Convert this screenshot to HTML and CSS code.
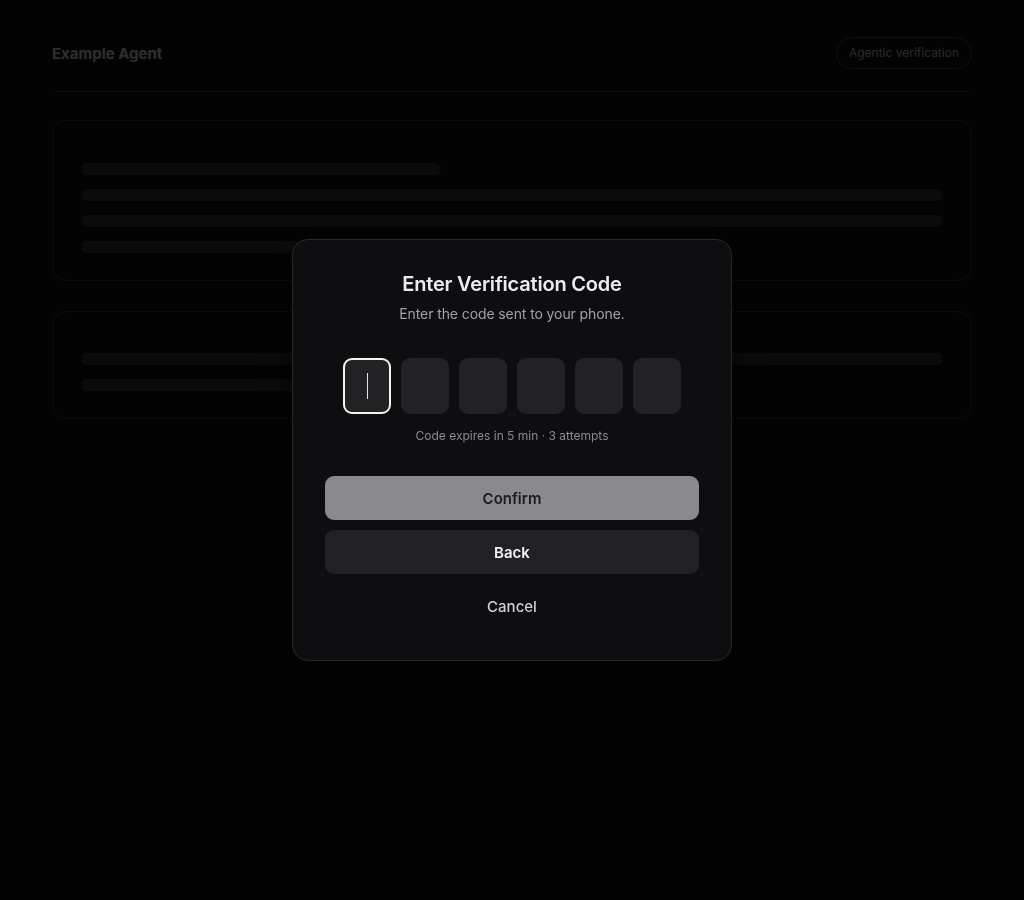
FILE: index.html
```html
<!DOCTYPE html>
<html lang="en">
  <head>
    <meta charset="UTF-8" />
    <meta name="viewport" content="width=device-width, initial-scale=1.0" />
    <title>Example Agent</title>
    <link rel="stylesheet" href="styles.css">
  </head>
  <body>
    <div class="page">
      <header class="topbar">
        <span class="brand">Example Agent</span>
        <span class="badge">Agentic verification</span>
      </header>

      <section class="card">
        <div class="bar bar-title"></div>
        <div class="bar"></div>
        <div class="bar"></div>
        <div class="bar bar-short"></div>
      </section>

      <section class="card card-small">
        <div class="bar"></div>
        <div class="bar bar-half"></div>
      </section>
    </div>

    <div class="overlay">
      <div class="modal">
        <h2 class="modal-title">Enter Verification Code</h2>
        <p class="modal-sub">Enter the code sent to your phone.</p>

        <div class="otp">
          <span class="otp-box active"><i class="caret"></i></span>
          <span class="otp-box"></span>
          <span class="otp-box"></span>
          <span class="otp-box"></span>
          <span class="otp-box"></span>
          <span class="otp-box"></span>
        </div>

        <p class="hint">Code expires in 5 min · 3 attempts</p>

        <div class="actions">
          <button class="btn btn-confirm">Confirm</button>
          <button class="btn btn-back">Back</button>
          <button class="btn btn-cancel">Cancel</button>
        </div>
      </div>
    </div>
  </body>
</html>
```

FILE: styles.css
```css
* {
  margin: 0;
  box-sizing: border-box;
}
body {
  margin: 0;
  background: #111113;
  font-family: Inter, "Noto Sans", "Liberation Sans", sans-serif;
  color: #e8e8e8;
  min-height: 900px;
}

/* page behind the dialog */
.page {
  padding: 37px 52px;
}
.topbar {
  display: flex;
  align-items: center;
  justify-content: space-between;
  padding-bottom: 22px;
  border-bottom: 1px solid #3c3c3e;
  margin-bottom: 28px;
}
.brand {
  font-size: 15px;
  font-weight: 700;
  color: #e2e2e2;
}
.badge {
  height: 32px;
  line-height: 30px;
  padding: 0 12px;
  border: 1px solid #545458;
  border-radius: 16px;
  font-size: 12px;
  color: #cfcfcf;
}
.card {
  border: 1px solid #444448;
  border-radius: 14px;
  padding: 42px 28px 27px;
  margin-bottom: 30px;
  display: flex;
  flex-direction: column;
  gap: 14px;
}
.card-small {
  padding-top: 41px;
}
.bar {
  height: 12px;
  border-radius: 6px;
  background: #38383c;
}
.bar-title {
  width: 360px;
}
.bar-short {
  width: 72%;
}
.bar-half {
  width: 60%;
}

/* dialog */
.overlay {
  position: fixed;
  inset: 0;
  background: rgba(0, 0, 0, 0.8);
  display: flex;
  align-items: center;
  justify-content: center;
}
.modal {
  width: 440px;
  background: #0e0e10;
  border: 1px solid #27272a;
  border-radius: 16px;
  padding: 32px;
  text-align: center;
  box-shadow: 0 20px 50px rgba(0, 0, 0, 0.5);
}
.modal-title {
  font-size: 20px;
  line-height: 24px;
  font-weight: 600;
  letter-spacing: -0.2px;
  color: #ececee;
}
.modal-sub {
  margin-top: 8px;
  font-size: 14px;
  line-height: 20px;
  letter-spacing: -0.1px;
  color: #a1a1a6;
}
.otp {
  margin-top: 34px;
  display: flex;
  justify-content: center;
  gap: 10px;
}
.otp-box {
  width: 48px;
  height: 56px;
  border-radius: 9px;
  background: #222224;
  display: flex;
  align-items: center;
  justify-content: center;
}
.otp-box.active {
  border: 2px solid #f4f4f5;
}
.caret {
  display: block;
  width: 1px;
  height: 26px;
  background: #e4e4e7;
}
.hint {
  margin-top: 13px;
  font-size: 12px;
  line-height: 18px;
  color: #8a8a90;
}
.actions {
  margin-top: 31px;
  display: flex;
  flex-direction: column;
  gap: 10px;
}
.btn {
  height: 44px;
  border: 0;
  border-radius: 9px;
  font-family: inherit;
  font-size: 15px;
  font-weight: 600;
  cursor: pointer;
}
.btn-confirm {
  background: #8a8a8c;
  color: #1c1c1e;
}
.btn-back {
  background: #222224;
  color: #f2f2f4;
}
.btn-cancel {
  background: transparent;
  color: #d0d0d4;
  font-weight: 500;
}
```
